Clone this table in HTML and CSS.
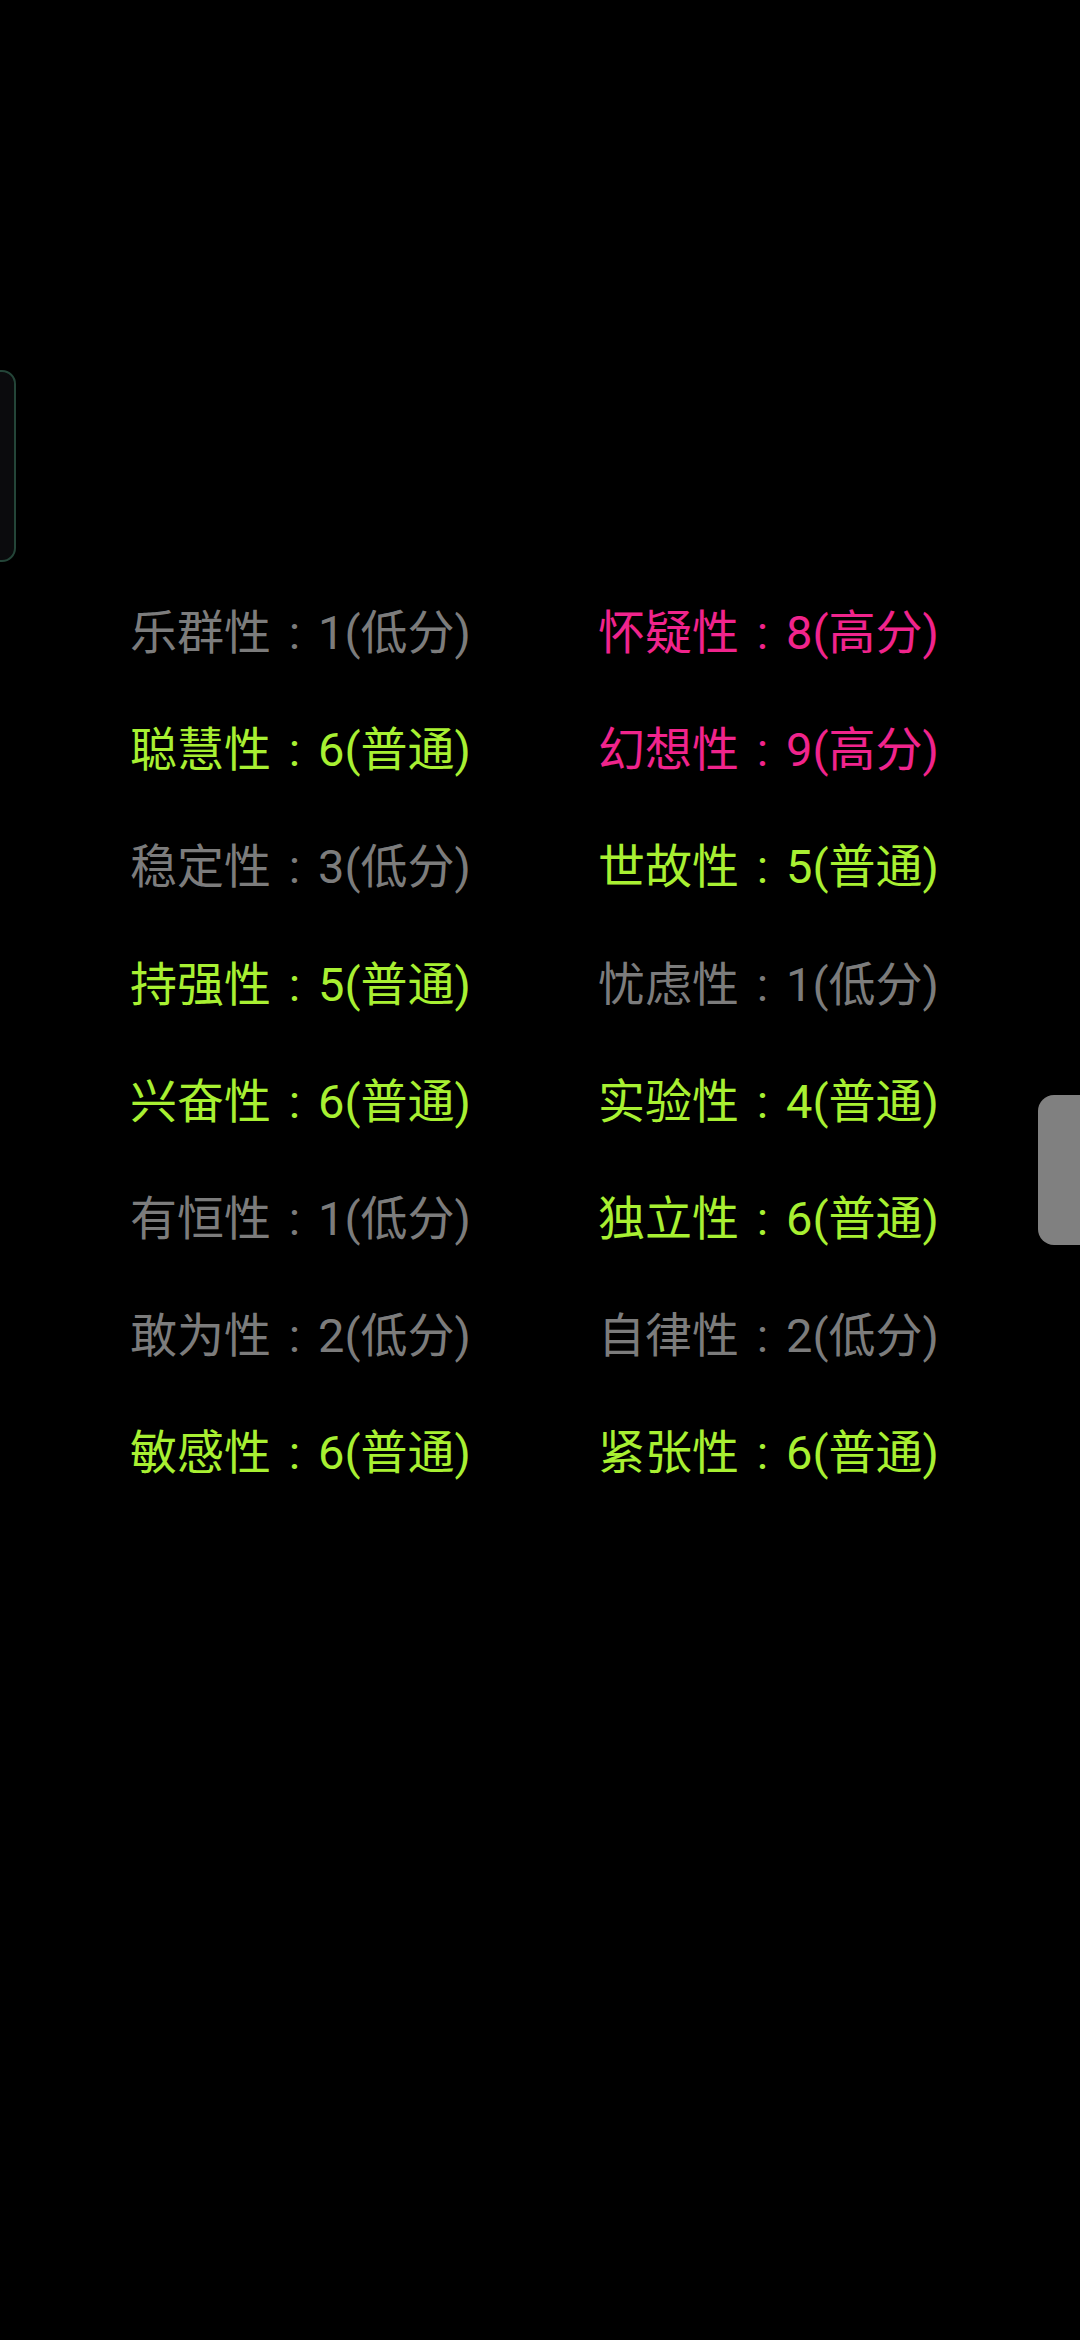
FILE: index.html
```html
<!DOCTYPE html>
<html lang="zh">
<head>
<meta charset="utf-8">
<link rel="stylesheet" href="styles.css">
</head>
<body>
<div class="edge-left"></div>
<div class="edge-right"></div>
<main class="grid">
  <div class="item low">乐群性<span class="colon">:</span>1(低分)</div>
  <div class="item high">怀疑性<span class="colon">:</span>8(高分)</div>
  <div class="item mid">聪慧性<span class="colon">:</span>6(普通)</div>
  <div class="item high">幻想性<span class="colon">:</span>9(高分)</div>
  <div class="item low">稳定性<span class="colon">:</span>3(低分)</div>
  <div class="item mid">世故性<span class="colon">:</span>5(普通)</div>
  <div class="item mid">持强性<span class="colon">:</span>5(普通)</div>
  <div class="item low">忧虑性<span class="colon">:</span>1(低分)</div>
  <div class="item mid">兴奋性<span class="colon">:</span>6(普通)</div>
  <div class="item mid">实验性<span class="colon">:</span>4(普通)</div>
  <div class="item low">有恒性<span class="colon">:</span>1(低分)</div>
  <div class="item mid">独立性<span class="colon">:</span>6(普通)</div>
  <div class="item low">敢为性<span class="colon">:</span>2(低分)</div>
  <div class="item low">自律性<span class="colon">:</span>2(低分)</div>
  <div class="item mid">敏感性<span class="colon">:</span>6(普通)</div>
  <div class="item mid">紧张性<span class="colon">:</span>6(普通)</div>
</main>
</body>
</html>
```
FILE: styles.css
```css
html, body {
  margin: 0;
  padding: 0;
  background: #000;
}
body {
  width: 1080px;
  height: 2340px;
  position: relative;
  overflow: hidden;
  font-family: Roboto, "Noto Sans CJK SC", sans-serif;
}
.edge-left {
  position: absolute;
  left: -40px;
  top: 370px;
  width: 52px;
  height: 188px;
  border: 2px solid #244538;
  border-radius: 14px;
  background: #0b0b0d;
}
.edge-right {
  position: absolute;
  left: 1038px;
  top: 1095px;
  width: 70px;
  height: 150px;
  border-radius: 16px;
  background: #808080;
}
.grid {
  display: grid;
  grid-template-columns: 468px 1fr;
  grid-auto-rows: 117.2px;
  padding: 574px 0 0 130px;
}
.item {
  font-size: 47px;
  line-height: 117px;
  white-space: nowrap;
}
.colon {
  display: inline-block;
  width: 1em;
  text-align: center;
}
.low { color: #7c7c7c; }
.mid { color: #a8f032; }
.high { color: #f0248c; }
```
